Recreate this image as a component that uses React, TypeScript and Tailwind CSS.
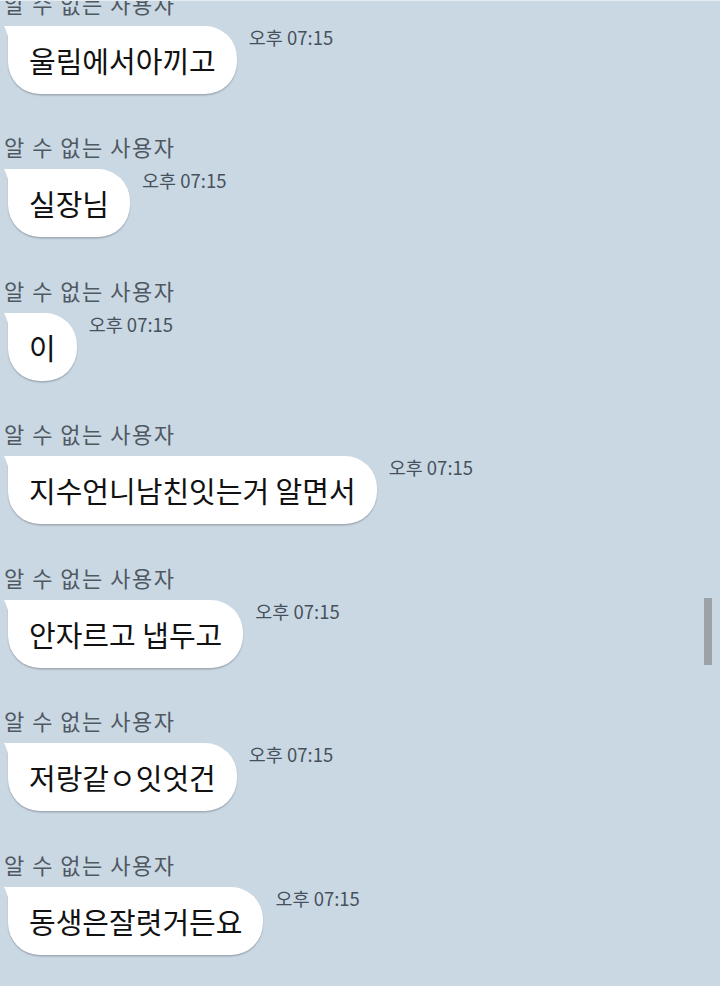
import React from "react";

const messages = [
  "울림에서아끼고",
  "실장님",
  "이",
  "지수언니남친잇는거 알면서",
  "안자르고 냅두고",
  "저랑같ㅇ잇엇건",
  "동생은잘렷거든요",
];

const font = { fontFamily: '"Noto Sans CJK KR", "Noto Sans", sans-serif' };

function Group({ text }: { text: string }) {
  return (
    <div className="flex flex-col mb-[37.5px]">
      <div className="h-[30px] leading-[30px] text-[22px] tracking-[1.5px] text-[#4f5962] pl-[4px] whitespace-nowrap">
        알 수 없는 사용자
      </div>
      <div className="flex items-start mt-[8px]">
        <div className="relative ml-[8px]">
          <svg
            className="absolute left-[-4px] top-0"
            width="6"
            height="22"
            viewBox="0 0 6 22"
          >
            <path d="M0 0 H6 V22 Q4.5 8 0 0 Z" fill="#ffffff" />
          </svg>
          <div className="h-[68px] flex items-center bg-white rounded-[32px] rounded-tl-none px-[21px] shadow-[0_1.5px_1.5px_rgba(0,0,0,0.22)]">
            <span className="text-[29px] leading-[34px] text-[#111111] whitespace-nowrap">
              {text}
            </span>
          </div>
        </div>
        <div className="ml-[12px] mt-[1px] text-[18.5px] leading-[20px] text-[#46515b] whitespace-nowrap">
          오후 07:15
        </div>
      </div>
    </div>
  );
}

export default function App() {
  return (
    <div
      className="relative w-[720px] h-[986px] overflow-hidden bg-[#cad8e4]"
      style={font}
    >
      <div className="flex flex-col mt-[-12.5px]">
        {messages.map((m, i) => (
          <Group key={i} text={m} />
        ))}
      </div>
      <div className="absolute top-0 left-0 right-0 h-px bg-[#e4ebf1]" />
      <div className="absolute left-[704px] top-[598px] w-[8px] h-[67px] bg-[#9ba3a8]" />
    </div>
  );
}
